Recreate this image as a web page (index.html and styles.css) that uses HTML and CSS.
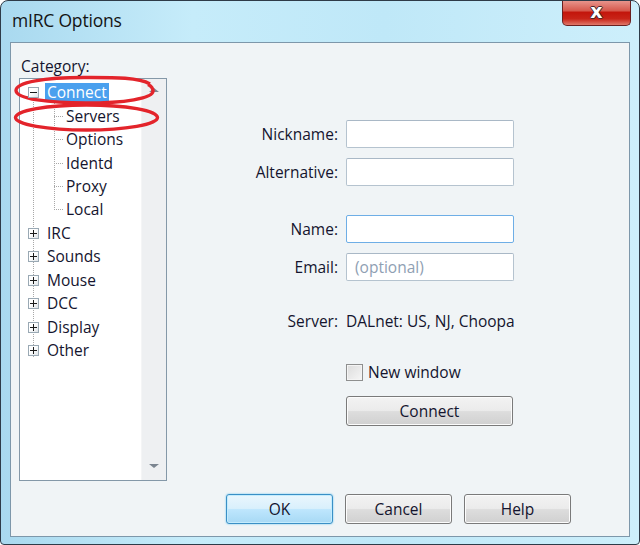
FILE: index.html
```html
<!DOCTYPE html>
<html>
<head>
<meta charset="utf-8">
<link rel="stylesheet" href="styles.css">
</head>
<body>
<div class="window">
  <div class="titlebar">
    <span class="title">mIRC Options</span>
    <div class="close"><span>x</span></div>
  </div>
  <div class="client">
    <div class="main">
      <div class="left">
        <div class="cat-label">Category:</div>
        <div class="tree">
          <div class="tree-list">
            <div class="item root open"><span class="box minus"></span><span class="txt sel">Connect</span></div>
            <div class="children">
              <div class="item child"><span class="hdots"></span><span class="txt">Servers</span></div>
              <div class="item child"><span class="hdots"></span><span class="txt">Options</span></div>
              <div class="item child"><span class="hdots"></span><span class="txt">Identd</span></div>
              <div class="item child"><span class="hdots"></span><span class="txt">Proxy</span></div>
              <div class="item child last"><span class="hdots"></span><span class="txt">Local</span></div>
            </div>
            <div class="item root"><span class="box plus"></span><span class="txt">IRC</span></div>
            <div class="item root"><span class="box plus"></span><span class="txt">Sounds</span></div>
            <div class="item root"><span class="box plus"></span><span class="txt">Mouse</span></div>
            <div class="item root"><span class="box plus"></span><span class="txt">DCC</span></div>
            <div class="item root"><span class="box plus"></span><span class="txt">Display</span></div>
            <div class="item root"><span class="box plus"></span><span class="txt">Other</span></div>
          </div>
          <div class="scrollbar">
            <span class="arrow up"></span>
            <span class="arrow down"></span>
          </div>
        </div>
      </div>
      <div class="form">
        <div class="field"><span class="lbl">Nickname:</span><span class="input"></span></div>
        <div class="field gap-s"><span class="lbl">Alternative:</span><span class="input"></span></div>
        <div class="field gap-l"><span class="lbl">Name:</span><span class="input focus"></span></div>
        <div class="field gap-s"><span class="lbl">Email:</span><span class="input"><span class="ph">(optional)</span></span></div>
        <div class="field server"><span class="lbl">Server:</span><span class="val">DALnet: US, NJ, Choopa</span></div>
        <div class="check-row"><span class="checkbox"></span><span>New window</span></div>
        <div class="btn connect">Connect</div>
      </div>
    </div>
    <div class="buttons">
      <div class="btn default">OK</div>
      <div class="btn">Cancel</div>
      <div class="btn">Help</div>
    </div>
  </div>
  <svg class="marks" width="640" height="545" viewBox="0 0 640 545">
    <path d="M150 84 C 138 77, 112 77.5, 84 77.5 C 45 77.5, 16 82, 16 90.5 C 16 99, 50 103, 86 103 C 124 103, 153 98.5, 153 91 C 153 88, 151 86, 148 84.5" fill="none" stroke="#e3242b" stroke-width="3.4"/>
    <ellipse cx="86.5" cy="117.5" rx="71" ry="12.5" fill="none" stroke="#e3242b" stroke-width="3.4"/>
  </svg>
</div>
</body>
</html>
```
FILE: styles.css
```css
html, body {
  margin: 0;
  padding: 0;
  background: #ffffff;
}
body {
  font-family: "Open Sans", "Noto Sans", sans-serif;
  font-size: 15.5px;
  color: #14142e;
}
.window {
  position: relative;
  width: 640px;
  height: 545px;
  box-sizing: border-box;
  border: 1px solid #2e3b48;
  border-radius: 8px 8px 4px 4px;
  background: linear-gradient(90deg, #a9d9ef 0%, #c6ecfa 30%, #bfe8f8 60%, #cdeffb 100%);
  display: flex;
  flex-direction: column;
  overflow: hidden;
}
.titlebar {
  height: 41px;
  display: flex;
  justify-content: space-between;
  align-items: flex-start;
  padding: 0 8px 0 11px;
  box-sizing: border-box;
}
.title {
  font-size: 17.5px;
  color: #141414;
  margin-top: 7px;
  letter-spacing: -0.2px;
}
.close {
  width: 69px;
  height: 26px;
  margin-top: -1px;
  box-sizing: border-box;
  border: 1px solid #6a2020;
  border-top: none;
  border-radius: 0 0 5px 5px;
  background: linear-gradient(180deg, #e99a92 0%, #d65a4e 42%, #c3160c 50%, #c82418 75%, #e0786a 100%);
  display: flex;
  justify-content: center;
  align-items: center;
}
.close span {
  font-family: "DejaVu Sans", sans-serif;
  font-weight: bold;
  font-size: 19px;
  color: #ffffff;
  line-height: 1;
  margin-top: -3px;
  text-shadow: 0 0 1px #3a2020, 1px 0 0 #4a2a30, -1px 0 0 #4a2a30, 0 1px 0 #4a2a30, 0 -1px 0 #4a2a30;
}
.client {
  margin: 0 9px 7px 9px;
  flex: 1;
  border: 1px solid #7d97aa;
  background: #f0f4f6;
  display: flex;
  flex-direction: column;
}
.main {
  display: flex;
  flex: 1;
}
.left {
  width: 156px;
  padding-left: 8px;
  padding-top: 12px;
  box-sizing: border-box;
}
.cat-label {
  height: 23px;
  line-height: 22px;
  padding-left: 2px;
}
.tree {
  width: 148px;
  height: 403px;
  box-sizing: border-box;
  border: 1px solid #8498a8;
  background: #ffffff;
  display: flex;
}
.tree-list {
  flex: 1;
  padding-top: 2px;
  position: relative;
}
.tree-list::before {
  content: "";
  position: absolute;
  left: 13px;
  top: 20px;
  height: 258px;
  border-left: 1px dotted #a8a8a8;
}
.item {
  height: 23.45px;
  display: flex;
  align-items: center;
  position: relative;
}
.root {
  padding-left: 8px;
}
.box {
  width: 11px;
  height: 11px;
  box-sizing: border-box;
  border: 1px solid #9aa9b4;
  background: linear-gradient(135deg, #ffffff 40%, #dfe4e8);
  margin-right: 6px;
  position: relative;
  z-index: 1;
}
.box::before,
.box::after {
  content: "";
  position: absolute;
  background: #1a1a1a;
}
.box::before {
  left: 1px;
  top: 4px;
  width: 7px;
  height: 1px;
}
.plus::after {
  left: 4px;
  top: 1px;
  width: 1px;
  height: 7px;
}
.minus::after {
  display: none;
}
.txt {
  padding: 0 2px;
  line-height: 19px;
}
.sel {
  background: #4aa0ee;
  color: #ffffff;
}
.children {
  position: relative;
}
.children::before {
  content: "";
  position: absolute;
  left: 34px;
  top: -4px;
  height: 110px;
  border-left: 1px dotted #a8a8a8;
}
.child {
  padding-left: 34px;
}
.hdots {
  width: 9px;
  border-top: 1px dotted #a8a8a8;
  margin-right: 1px;
}
.scrollbar {
  width: 24px;
  background: #eef0f2;
  border-left: 1px solid #f4f5f6;
  position: relative;
}
.arrow {
  position: absolute;
  left: 7px;
  width: 0;
  height: 0;
  border-left: 5px solid transparent;
  border-right: 5px solid transparent;
}
.arrow.up {
  top: 9px;
  border-bottom: 4px solid #7b8590;
}
.arrow.down {
  bottom: 12px;
  border-top: 4px solid #7b8590;
}
.form {
  flex: 1;
  padding-top: 77px;
  padding-left: 33px;
}
.field {
  display: flex;
  align-items: center;
  gap: 8px;
  height: 28px;
}
.gap-s {
  margin-top: 10px;
}
.gap-l {
  margin-top: 29px;
}
.lbl {
  width: 138px;
  text-align: right;
}
.input {
  width: 168px;
  height: 28px;
  box-sizing: border-box;
  border: 1px solid #b5c3cf;
  border-top-color: #a9b8c6;
  border-radius: 2px;
  background: #ffffff;
  display: flex;
  align-items: center;
  padding-left: 8px;
}
.input.focus {
  border-color: #6eaee6;
}
.ph {
  color: #8fa0b3;
}
.server {
  margin-top: 28px;
  height: 24px;
}
.check-row {
  margin-top: 29px;
  margin-left: 146px;
  height: 20px;
  display: flex;
  align-items: center;
  gap: 5px;
}
.checkbox {
  width: 17px;
  height: 17px;
  box-sizing: border-box;
  border: 1px solid #8e8f8f;
  background: linear-gradient(135deg, #dcdcdc, #f6f6f6);
  box-shadow: inset 0 0 0 1px #f4f4f4;
}
.btn {
  width: 107px;
  height: 30px;
  box-sizing: border-box;
  border: 1px solid #7a7a7a;
  border-radius: 3px;
  background: linear-gradient(180deg, #f3f3f3 0%, #ebebeb 48%, #dddddd 52%, #d0d0d0 100%);
  box-shadow: inset 0 0 0 1px #fcfcfc;
  display: flex;
  justify-content: center;
  align-items: center;
  color: #14142e;
}
.btn.connect {
  width: 167px;
  margin-top: 14px;
  margin-left: 146px;
}
.btn.default {
  border-color: #3a8fc6;
  background: linear-gradient(180deg, #eaf6fd 0%, #d9f0fc 48%, #bee6fd 52%, #a7d9f5 100%);
  box-shadow: inset 0 0 0 1px #c4ecfd, 0 0 2px #5ec3f0;
}
.buttons {
  display: flex;
  justify-content: flex-end;
  gap: 12px;
  padding-right: 58px;
  margin-top: 12px;
  padding-bottom: 12px;
}
.marks {
  position: absolute;
  left: -1px;
  top: -1px;
  pointer-events: none;
}
```
